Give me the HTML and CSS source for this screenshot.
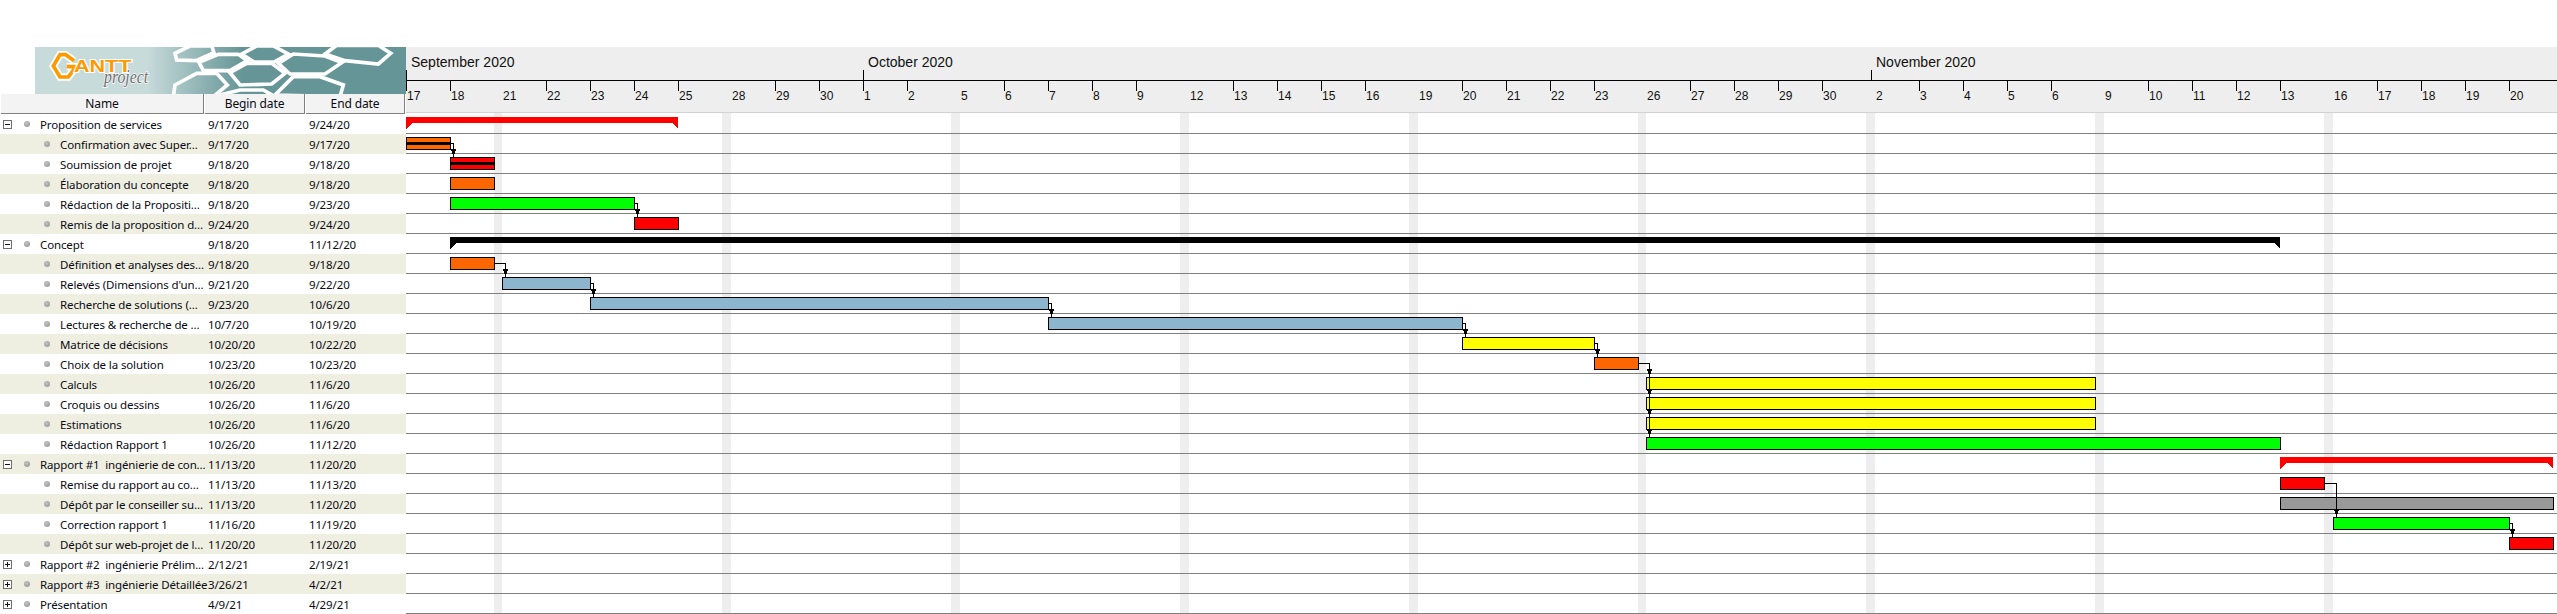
FILE: index.html
```html
<!DOCTYPE html>
<html lang="fr">
<head>
<meta charset="utf-8">
<title>GanttProject</title>
<link rel="stylesheet" href="styles.css">
</head>
<body>
<div class="app">
  <section class="left">
    <svg class="logo" viewBox="105 51 1113 141" width="371" height="47" aria-label="GanttProject">
      <defs>
        <linearGradient id="lg" gradientUnits="userSpaceOnUse" x1="440" y1="0" x2="730" y2="0">
          <stop offset="0" stop-color="#c8dbdb"/>
          <stop offset="1" stop-color="#659596"/>
        </linearGradient>
      </defs>
      <rect x="105" y="51" width="1113" height="141" fill="url(#lg)"/>
      <g class="hex">
        <polygon points="525,70 570,48 635,48 642,68 588,92 530,90"/>
        <polygon points="597,97 655,73 715,73 742,92 690,122 610,122"/>
        <polygon points="725,72 770,48 820,48 865,72 822,96 762,96"/>
        <polygon points="835,100 880,72 975,78 1025,98 975,132 870,132"/>
        <polygon points="690,128 740,100 815,100 855,130 815,162 720,165"/>
        <polygon points="975,72 1010,46 1135,46 1172,70 1135,102 1035,92"/>
        <polygon points="525,165 590,130 650,130 682,165 640,200 520,200"/>
        <polygon points="640,200 720,180 790,180 825,200"/>
        <polygon points="825,195 880,140 960,140 1030,165 1020,200"/>
      </g>
      <polyline class="g-halo" points="222,92 197,74 180,74 160,108 180,141 205,141 222,118 222,110 200,110"/>
      <polyline class="g-mark" points="222,92 197,74 180,74 160,108 180,141 205,141 222,118 222,110 200,110"/>
      <text class="logo-gantt" x="222" y="126" textLength="172" lengthAdjust="spacingAndGlyphs">ANTT</text>
      <text class="logo-project" x="312" y="158" textLength="132" lengthAdjust="spacingAndGlyphs">project</text>
    </svg>
    <div class="thead">
      <div class="th">Name</div>
      <div class="th">Begin date</div>
      <div class="th">End date</div>
    </div>
    <div class="row"><div class="name group"><span class="exp minus"></span><span class="dot"></span><span class="label">Proposition de services</span></div><div>9/17/20</div><div>9/24/20</div></div>
    <div class="row"><div class="name child"><span class="dot"></span><span class="label">Confirmation avec Super...</span></div><div>9/17/20</div><div>9/17/20</div></div>
    <div class="row"><div class="name child"><span class="dot"></span><span class="label">Soumission de projet</span></div><div>9/18/20</div><div>9/18/20</div></div>
    <div class="row"><div class="name child"><span class="dot"></span><span class="label">Élaboration du concepte</span></div><div>9/18/20</div><div>9/18/20</div></div>
    <div class="row"><div class="name child"><span class="dot"></span><span class="label">Rédaction de la Propositi...</span></div><div>9/18/20</div><div>9/23/20</div></div>
    <div class="row"><div class="name child"><span class="dot"></span><span class="label">Remis de la proposition d...</span></div><div>9/24/20</div><div>9/24/20</div></div>
    <div class="row"><div class="name group"><span class="exp minus"></span><span class="dot"></span><span class="label">Concept</span></div><div>9/18/20</div><div>11/12/20</div></div>
    <div class="row"><div class="name child"><span class="dot"></span><span class="label">Définition et analyses des...</span></div><div>9/18/20</div><div>9/18/20</div></div>
    <div class="row"><div class="name child"><span class="dot"></span><span class="label">Relevés (Dimensions d'un...</span></div><div>9/21/20</div><div>9/22/20</div></div>
    <div class="row"><div class="name child"><span class="dot"></span><span class="label">Recherche de solutions (...</span></div><div>9/23/20</div><div>10/6/20</div></div>
    <div class="row"><div class="name child"><span class="dot"></span><span class="label">Lectures &amp; recherche de ...</span></div><div>10/7/20</div><div>10/19/20</div></div>
    <div class="row"><div class="name child"><span class="dot"></span><span class="label">Matrice de décisions</span></div><div>10/20/20</div><div>10/22/20</div></div>
    <div class="row"><div class="name child"><span class="dot"></span><span class="label">Choix de la solution</span></div><div>10/23/20</div><div>10/23/20</div></div>
    <div class="row"><div class="name child"><span class="dot"></span><span class="label">Calculs</span></div><div>10/26/20</div><div>11/6/20</div></div>
    <div class="row"><div class="name child"><span class="dot"></span><span class="label">Croquis ou dessins</span></div><div>10/26/20</div><div>11/6/20</div></div>
    <div class="row"><div class="name child"><span class="dot"></span><span class="label">Estimations</span></div><div>10/26/20</div><div>11/6/20</div></div>
    <div class="row"><div class="name child"><span class="dot"></span><span class="label">Rédaction Rapport 1</span></div><div>10/26/20</div><div>11/12/20</div></div>
    <div class="row"><div class="name group"><span class="exp minus"></span><span class="dot"></span><span class="label">Rapport #1  ingénierie de con...</span></div><div>11/13/20</div><div>11/20/20</div></div>
    <div class="row"><div class="name child"><span class="dot"></span><span class="label">Remise du rapport au co...</span></div><div>11/13/20</div><div>11/13/20</div></div>
    <div class="row"><div class="name child"><span class="dot"></span><span class="label">Dépôt par le conseiller su...</span></div><div>11/13/20</div><div>11/20/20</div></div>
    <div class="row"><div class="name child"><span class="dot"></span><span class="label">Correction rapport 1</span></div><div>11/16/20</div><div>11/19/20</div></div>
    <div class="row"><div class="name child"><span class="dot"></span><span class="label">Dépôt sur web-projet de l...</span></div><div>11/20/20</div><div>11/20/20</div></div>
    <div class="row"><div class="name group"><span class="exp plus"></span><span class="dot"></span><span class="label">Rapport #2  ingénierie Prélim...</span></div><div>2/12/21</div><div>2/19/21</div></div>
    <div class="row"><div class="name group"><span class="exp plus"></span><span class="dot"></span><span class="label">Rapport #3  ingénierie Détaillée</span></div><div>3/26/21</div><div>4/2/21</div></div>
    <div class="row"><div class="name group"><span class="exp plus"></span><span class="dot"></span><span class="label">Présentation</span></div><div>4/9/21</div><div>4/29/21</div></div>
  </section>

  <svg class="chart" viewBox="406 47 2151 567" width="2151" height="567" shape-rendering="crispEdges">
    <defs>
      <path id="ah" d="M-2 0H3V1.5H2.5L2 4 1 6H0L-1 4-1.5 1.5H-2Z"/>
    </defs>
    <rect class="tl-bg" x="406" y="47" width="2151" height="65"/>
    <rect class="tl-edge" x="406" y="112" width="2151" height="1"/>
    <rect class="ink" x="406" y="80" width="2151" height="1"/>
    <path class="tick" d="M406.5 70V91M863.5 70V91M1871.5 70V80M450.5 81V91M546.5 81V91M590.5 81V91M634.5 81V91M678.5 81V91M775.5 81V91M819.5 81V91M907.5 81V91M1004.5 81V91M1048.5 81V91M1092.5 81V91M1136.5 81V91M1233.5 81V91M1277.5 81V91M1321.5 81V91M1365.5 81V91M1462.5 81V91M1506.5 81V91M1550.5 81V91M1594.5 81V91M1690.5 81V91M1734.5 81V91M1778.5 81V91M1822.5 81V91M1919.5 81V91M1963.5 81V91M2007.5 81V91M2051.5 81V91M2148.5 81V91M2192.5 81V91M2236.5 81V91M2280.5 81V91M2377.5 81V91M2421.5 81V91M2465.5 81V91M2509.5 81V91"/>
    <g class="month">
      <text x="411" y="67">September 2020</text>
      <text x="868" y="67">October 2020</text>
      <text x="1876" y="67">November 2020</text>
    </g>
    <g class="day">
      <text x="407" y="100">17</text><text x="451" y="100">18</text><text x="503" y="100">21</text><text x="547" y="100">22</text><text x="591" y="100">23</text><text x="635" y="100">24</text><text x="679" y="100">25</text><text x="732" y="100">28</text><text x="776" y="100">29</text><text x="820" y="100">30</text><text x="864" y="100">1</text><text x="908" y="100">2</text><text x="961" y="100">5</text><text x="1005" y="100">6</text><text x="1049" y="100">7</text><text x="1093" y="100">8</text><text x="1137" y="100">9</text><text x="1190" y="100">12</text><text x="1234" y="100">13</text><text x="1278" y="100">14</text><text x="1322" y="100">15</text><text x="1366" y="100">16</text><text x="1419" y="100">19</text><text x="1463" y="100">20</text><text x="1507" y="100">21</text><text x="1551" y="100">22</text><text x="1595" y="100">23</text><text x="1647" y="100">26</text><text x="1691" y="100">27</text><text x="1735" y="100">28</text><text x="1779" y="100">29</text><text x="1823" y="100">30</text><text x="1876" y="100">2</text><text x="1920" y="100">3</text><text x="1964" y="100">4</text><text x="2008" y="100">5</text><text x="2052" y="100">6</text><text x="2105" y="100">9</text><text x="2149" y="100">10</text><text x="2193" y="100">11</text><text x="2237" y="100">12</text><text x="2281" y="100">13</text><text x="2334" y="100">16</text><text x="2378" y="100">17</text><text x="2422" y="100">18</text><text x="2466" y="100">19</text><text x="2510" y="100">20</text>
    </g>
    <g class="weekend">
      <rect x="494" y="113" width="8" height="501"/>
      <rect x="722" y="113" width="9" height="501"/>
      <rect x="951" y="113" width="9" height="501"/>
      <rect x="1180" y="113" width="9" height="501"/>
      <rect x="1409" y="113" width="9" height="501"/>
      <rect x="1638" y="113" width="8" height="501"/>
      <rect x="1866" y="113" width="9" height="501"/>
      <rect x="2095" y="113" width="9" height="501"/>
      <rect x="2324" y="113" width="9" height="501"/>
    </g>
    <path class="gridline" d="M406 133.5H2557M406 153.5H2557M406 173.5H2557M406 193.5H2557M406 213.5H2557M406 233.5H2557M406 253.5H2557M406 273.5H2557M406 293.5H2557M406 313.5H2557M406 333.5H2557M406 353.5H2557M406 373.5H2557M406 393.5H2557M406 413.5H2557M406 433.5H2557M406 453.5H2557M406 473.5H2557M406 493.5H2557M406 513.5H2557M406 533.5H2557M406 553.5H2557M406 573.5H2557M406 593.5H2557M406 613.5H2557"/>
    <polygon class="c-red" points="406,117 678,117 678,129 672,123 412,123 406,129"/>
    <polygon class="c-black" points="450,237 2280,237 2280,249 2274,243 456,243 450,249"/>
    <polygon class="c-red" points="2280,457 2553,457 2553,469 2547,463 2286,463 2280,469"/>
    <rect class="bar c-orange" x="406.5" y="137.5" width="44" height="12"/>
    <rect class="c-black" x="406" y="142" width="44" height="3"/>
    <rect class="bar c-red" x="450.5" y="157.5" width="44" height="12"/>
    <rect class="c-black" x="450" y="162" width="44" height="3"/>
    <rect class="bar c-orange" x="450.5" y="177.5" width="44" height="12"/>
    <rect class="bar c-green" x="450.5" y="197.5" width="184" height="12"/>
    <rect class="bar c-red" x="634.5" y="217.5" width="44" height="12"/>
    <rect class="bar c-orange" x="450.5" y="257.5" width="44" height="12"/>
    <rect class="bar c-blue" x="502.5" y="277.5" width="88" height="12"/>
    <rect class="bar c-blue" x="590.5" y="297.5" width="458" height="12"/>
    <rect class="bar c-blue" x="1048.5" y="317.5" width="414" height="12"/>
    <rect class="bar c-yellow" x="1462.5" y="337.5" width="132" height="12"/>
    <rect class="bar c-orange" x="1594.5" y="357.5" width="44" height="12"/>
    <rect class="bar c-yellow" x="1646.5" y="377.5" width="449" height="12"/>
    <rect class="bar c-yellow" x="1646.5" y="397.5" width="449" height="12"/>
    <rect class="bar c-yellow" x="1646.5" y="417.5" width="449" height="12"/>
    <rect class="bar c-green" x="1646.5" y="437.5" width="634" height="12"/>
    <rect class="bar c-red" x="2280.5" y="477.5" width="44" height="12"/>
    <rect class="bar c-gray" x="2280.5" y="497.5" width="273" height="12"/>
    <rect class="bar c-green" x="2333.5" y="517.5" width="176" height="12"/>
    <rect class="bar c-red" x="2509.5" y="537.5" width="44" height="12"/>
    <path class="dep" d="M451 143.5H453.5V157M635 203.5H637.5V217M495 263.5H505.5V277M591 283.5H593.5V297M1049 303.5H1051.5V317M1463 323.5H1465.5V337M1595 343.5H1597.5V357M1639 363.5H1649.5V437M2325 483.5H2336.5V517M2510 523.5H2512.5V537"/>
    <use href="#ah" x="453" y="149"/>
    <use href="#ah" x="637" y="209"/>
    <use href="#ah" x="505" y="269"/>
    <use href="#ah" x="593" y="289"/>
    <use href="#ah" x="1051" y="309"/>
    <use href="#ah" x="1465" y="329"/>
    <use href="#ah" x="1597" y="349"/>
    <use href="#ah" x="1649" y="369"/>
    <use href="#ah" x="1649" y="389"/>
    <use href="#ah" x="1649" y="409"/>
    <use href="#ah" x="1649" y="429"/>
    <use href="#ah" x="2336" y="509"/>
    <use href="#ah" x="2512" y="529"/>
  </svg>
</div>
</body>
</html>
```
FILE: styles.css
```css
html, body {
  margin: 0;
  padding: 0;
  background: #fff;
  overflow: hidden;
}

.app {
  display: flex;
  width: 2557px;
  height: 614px;
  padding-top: 47px;
  box-sizing: border-box;
}

.left {
  flex: 0 0 406px;
  width: 406px;
  font-family: "Noto Sans", sans-serif;
  font-size: 11.5px;
  letter-spacing: -0.12px;
  color: #0a0a14;
}

.logo {
  display: block;
  margin-left: 35px;
}

.hex polygon {
  fill: none;
  stroke: #fff;
  stroke-width: 11;
  stroke-linejoin: miter;
}

.g-halo, .g-mark {
  fill: none;
  stroke-linejoin: miter;
}
.g-halo { stroke: #fff; stroke-width: 22; }
.g-mark { stroke: #f90; stroke-width: 11; }

.logo-gantt {
  font-family: "Liberation Sans", sans-serif;
  font-weight: 700;
  font-size: 48px;
  fill: #f90;
  stroke: #fff;
  stroke-width: 6;
  paint-order: stroke;
}

.logo-project {
  font-family: "Liberation Serif", serif;
  font-style: italic;
  font-size: 54px;
  fill: #6f6f6f;
  stroke: #fff;
  stroke-width: 4;
  paint-order: stroke;
}

.thead {
  display: grid;
  grid-template-columns: 204px 101px 100px;
  height: 20px;
  margin-left: 1px;
  font-size: 12px;
}

.th {
  display: flex;
  align-items: center;
  justify-content: center;
  background: #f3f3f3;
  border-right: 1px solid #808080;
  border-bottom: 1px solid #808080;
  box-sizing: border-box;
  line-height: 18px;
  margin-right: 1px;
}

.row {
  display: grid;
  grid-template-columns: 208px 101px 97px;
  height: 20px;
  line-height: 21px;
  white-space: pre;
}

.row:nth-of-type(odd) { background: #efefe1; }

.name {
  display: flex;
  align-items: center;
  overflow: hidden;
}

.group { padding-left: 3px; }
.child { padding-left: 44px; }

.exp {
  position: relative;
  flex: 0 0 9px;
  width: 9px;
  height: 9px;
  margin-right: 12px;
  border: 1px solid #6e6e6e;
  box-sizing: border-box;
  background: #fff;
}

.exp::before {
  content: "";
  position: absolute;
  left: 1px;
  top: 3px;
  width: 5px;
  height: 1px;
  background: #111;
}

.plus::after {
  content: "";
  position: absolute;
  left: 3px;
  top: 1px;
  width: 1px;
  height: 5px;
  background: #111;
}

.dot {
  flex: 0 0 6px;
  width: 6px;
  height: 6px;
  margin-right: 10px;
  margin-top: -2px;
  border-radius: 50%;
  background: radial-gradient(circle at 40% 35%, #c4c4c4, #8e8e8e);
}

.chart {
  flex: 0 0 2151px;
  display: block;
}

.tl-bg { fill: #eee; }
.tl-edge { fill: #d2d2d2; }
.ink { fill: #000; }
.tick { stroke: #000; stroke-width: 1; fill: none; }

.month text {
  font-family: "Liberation Sans", sans-serif;
  font-size: 14px;
  fill: #111;
}

.day text {
  font-family: "Liberation Sans", sans-serif;
  font-size: 12px;
  fill: #111;
}

.weekend rect { fill: #eee; }
.gridline { stroke: #808080; stroke-width: 1; fill: none; }

.bar { stroke: #000; stroke-width: 1; }
.c-red { fill: #f00; }
.c-black { fill: #000; }
.c-orange { fill: #f60; }
.c-green { fill: #0f0; }
.c-yellow { fill: #ff0; }
.c-blue { fill: #8cb6ce; }
.c-gray { fill: #999; }

.dep { stroke: #000; stroke-width: 1; fill: none; }
use { fill: #000; }
```
